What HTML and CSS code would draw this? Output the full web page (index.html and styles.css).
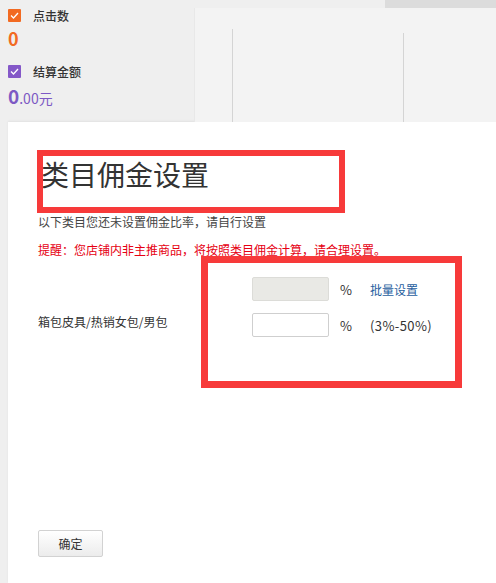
FILE: index.html
```html
<!DOCTYPE html>
<html lang="zh-CN">
<head>
<meta charset="utf-8">
<title>类目佣金设置</title>
<link rel="stylesheet" href="styles.css">
</head>
<body>
<div class="top">
  <div class="stats">
    <div class="stat-row">
      <span class="check check-orange"><svg viewBox="0 0 13 13" width="13" height="13"><polyline points="3,6.5 5.5,9 10,4" fill="none" stroke="#fff" stroke-width="1.3"/></svg></span>
      <span class="stat-label">点击数</span>
    </div>
    <div class="num num-orange">0</div>
    <div class="stat-row row-second">
      <span class="check check-purple"><svg viewBox="0 0 13 13" width="13" height="13"><polyline points="3,6.5 5.5,9 10,4" fill="none" stroke="#fff" stroke-width="1.3"/></svg></span>
      <span class="stat-label">结算金额</span>
    </div>
    <div class="num num-purple"><b>0</b><span class="dec">.00元</span></div>
  </div>
  <div class="chart">
    <div class="strip"><div class="strip-fill"></div></div>
    <div class="panel">
      <div class="col col-a"></div>
      <div class="col col-b"></div>
    </div>
  </div>
</div>

<div class="modal">
  <h1 class="title">类目佣金设置</h1>
  <p class="desc">以下类目您还未设置佣金比率，请自行设置</p>
  <p class="warn">提醒：您店铺内非主推商品，将按照类目佣金计算，请合理设置。</p>
  <div class="form">
    <span class="cell"></span>
    <input class="rate rate-disabled" type="text" disabled>
    <span class="pct">%</span>
    <a class="batch" href="#">批量设置</a>
    <span class="cat">箱包皮具/热销女包/男包</span>
    <input class="rate" type="text">
    <span class="pct">%</span>
    <span class="range">(3%-50%)</span>
  </div>
  <button class="ok" type="button">确定</button>
</div>

<div class="mark mark-title"></div>
<div class="mark mark-form"></div>
</body>
</html>
```

FILE: styles.css
```css
html, body {
  margin: 0;
  padding: 0;
}
body {
  background: #efefef;
  font-family: "Noto Sans CJK SC", "Microsoft YaHei", sans-serif;
  color: #333;
  position: relative;
  width: 496px;
  height: 583px;
  overflow: hidden;
}
.top {
  display: flex;
  height: 122px;
}
.stats {
  width: 186px;
  padding: 6px 0 0 8px;
}
.stat-row {
  display: flex;
  align-items: center;
  gap: 12px;
  height: 18px;
}
.row-second {
  margin-top: 12px;
}
.check {
  width: 13px;
  height: 13px;
  border-radius: 1px;
  display: block;
}
.check svg {
  display: block;
}
.check-orange { background: #f26a22; }
.check-purple { background: #8458c8; }
.stat-label {
  font-size: 12px;
  color: #333;
  font-weight: 500;
}
.num {
  line-height: 24px;
}
.num-orange {
  margin-top: 2px;
  font-size: 18px;
  font-weight: bold;
  color: #f26a22;
}
.num-purple {
  margin-top: 4px;
  color: #7d59c4;
}
.num-purple b {
  font-size: 19px;
}
.num-purple .dec {
  font-size: 14px;
}
.chart {
  flex: 1;
  display: flex;
  flex-direction: column;
}
.strip {
  height: 8px;
  display: flex;
}
.strip-fill {
  margin-left: auto;
  width: 111px;
  background: #dcdcdc;
}
.panel {
  flex: 1;
  background: #f3f3f3;
  display: flex;
  padding-left: 37px;
  border-left: 1px solid #e8e8e8;
}
.col {
  border-left: 1px solid #d4d4d4;
}
.col-a {
  width: 170px;
  margin-top: 21px;
}
.col-b {
  flex: 1;
  margin-top: 25px;
}
.modal {
  margin-left: 8px;
  height: 461px;
  background: #fff;
  padding: 35px 30px 0;
  box-sizing: border-box;
  box-shadow: 0 -1px 2px rgba(0, 0, 0, 0.06);
}
.title {
  margin: 0 0 0 3px;
  font-size: 28px;
  line-height: 34px;
  font-weight: normal;
  color: #333;
}
.desc {
  margin: 22px 0 0;
  font-size: 12px;
  line-height: 18px;
  color: #444;
}
.warn {
  margin: 10px 0 0;
  font-size: 12px;
  line-height: 18px;
  color: #e60012;
}
.form {
  margin-top: 18px;
  display: grid;
  grid-template-columns: 214px 77px 41px auto;
  grid-auto-rows: 24px;
  row-gap: 12px;
  align-items: center;
  font-size: 12px;
}
.rate {
  width: 77px;
  height: 24px;
  box-sizing: border-box;
  border: 1px solid #cfcfcf;
  border-radius: 2px;
  background: #fff;
  padding: 0 4px;
  margin: 0;
  font-size: 12px;
}
.rate-disabled {
  background: #e9e9e5;
  border-color: #dcdcd8;
}
.pct {
  padding-left: 11px;
  font-size: 13px;
  color: #333;
}
.batch {
  color: #1f5e9e;
  text-decoration: none;
}
.range {
  font-size: 13px;
  letter-spacing: 0.4px;
  color: #333;
}
.cat {
  align-self: start;
  color: #333;
}
.ok {
  margin-top: 193px;
  width: 65px;
  height: 27px;
  border: 1px solid #d2d2d2;
  border-radius: 2px;
  background: linear-gradient(#ffffff, #ececec);
  font-family: inherit;
  font-size: 12px;
  color: #333;
  padding: 0;
}
.mark {
  position: absolute;
  border: 6px solid #f73a3a;
  box-sizing: border-box;
}
.mark-title {
  left: 37px;
  top: 150px;
  width: 308px;
  height: 63px;
}
.mark-form {
  left: 201px;
  top: 256px;
  width: 261px;
  height: 132px;
  border-width: 7px;
}
```
